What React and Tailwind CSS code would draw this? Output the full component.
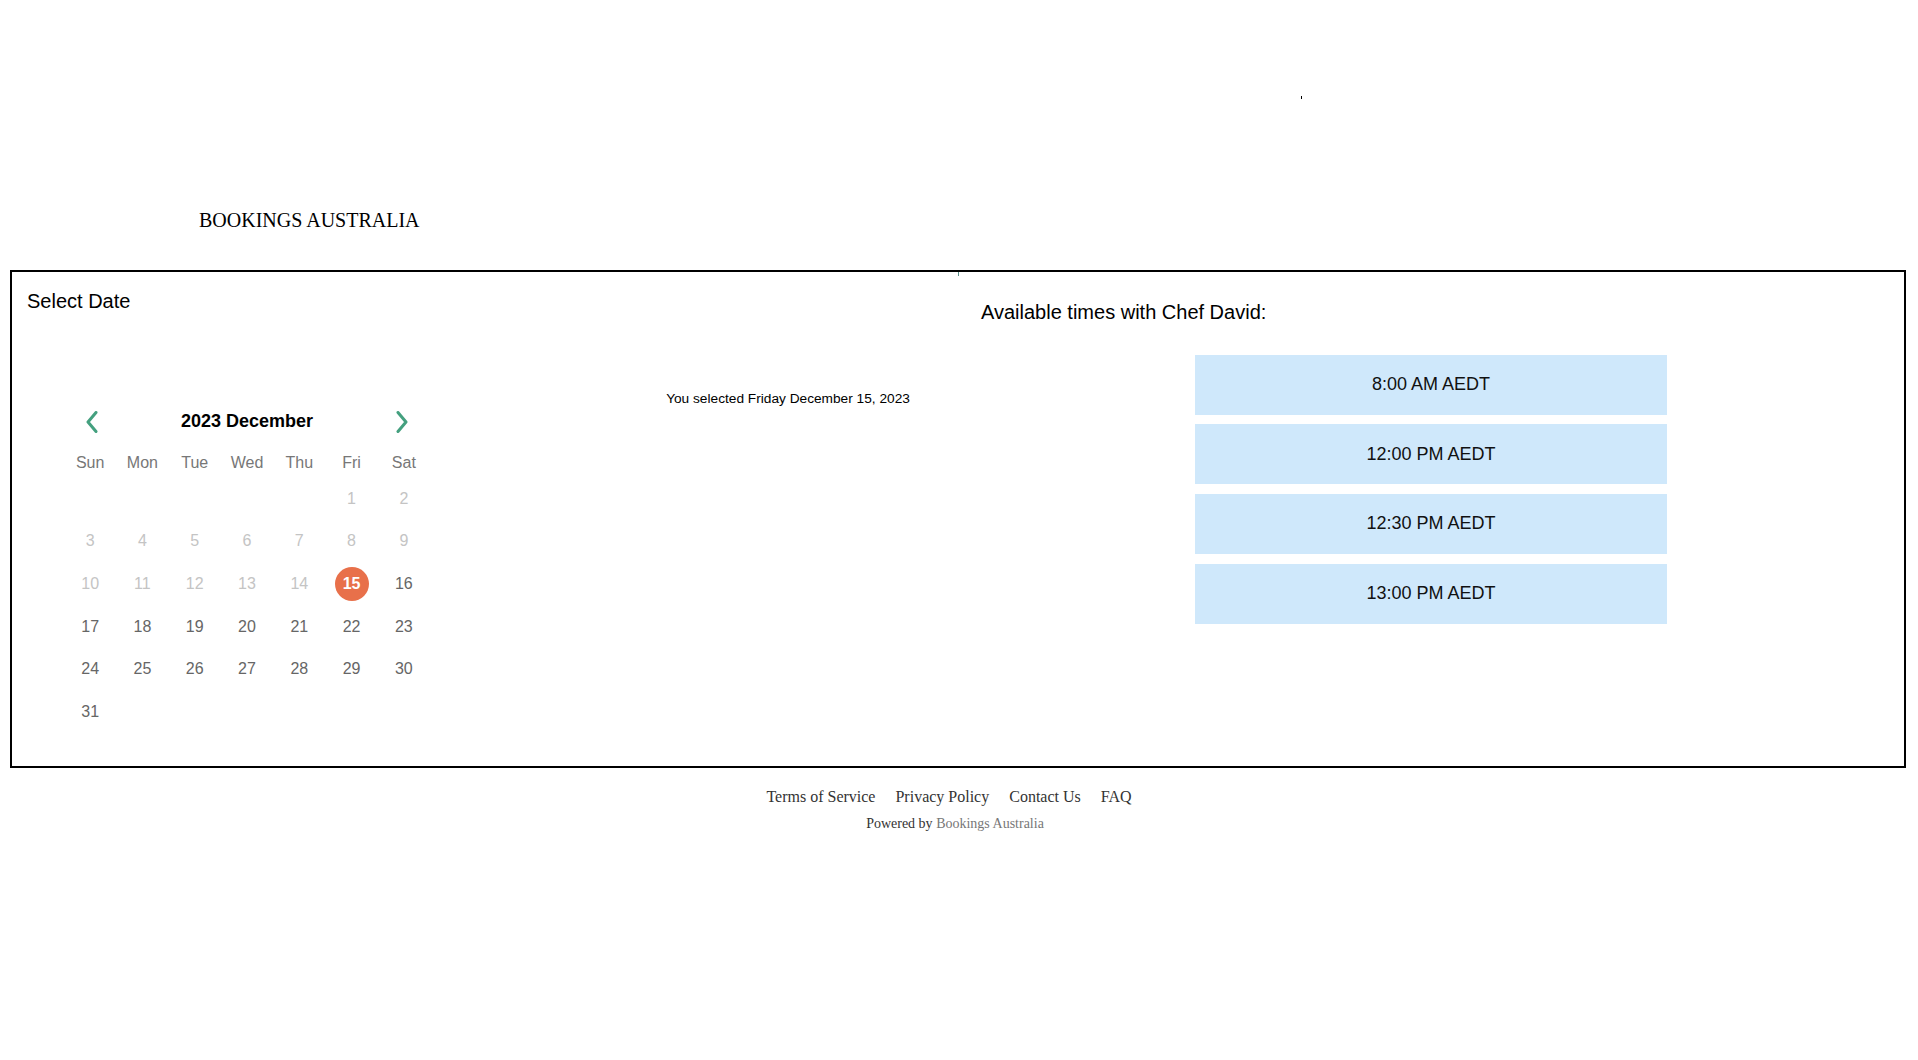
import React from 'react';

const WEEKDAYS = ['Sun', 'Mon', 'Tue', 'Wed', 'Thu', 'Fri', 'Sat'];
const TIMES = ['8:00 AM AEDT', '12:00 PM AEDT', '12:30 PM AEDT', '13:00 PM AEDT'];
const SELECTED = 15;

const Chevron = ({ dir }) => (
  <svg width="12" height="22" viewBox="0 0 12 22" fill="none">
    <polyline
      points={dir === 'left' ? '10,1.5 2,11 10,20.5' : '2,1.5 10,11 2,20.5'}
      stroke="#44a07f"
      strokeWidth="3"
      strokeLinecap="round"
      strokeLinejoin="round"
    />
  </svg>
);

const Calendar = () => {
  // December 2023 starts on a Friday
  const cells = [...Array(5).fill(null), ...Array.from({ length: 31 }, (_, i) => i + 1)];

  return (
    <div className="w-[366px] ml-[37px] mt-[21px]">
      <div className="h-[40px] flex items-center justify-between px-[22px]">
        <button className="flex items-center"><Chevron dir="left" /></button>
        <span className="text-[18px] font-bold text-black">2023 December</span>
        <button className="flex items-center"><Chevron dir="right" /></button>
      </div>
      <div className="grid grid-cols-7 h-[30px] mt-[6px] items-center text-[16px] text-[#777]">
        {WEEKDAYS.map((d) => (
          <div key={d} className="text-center">{d}</div>
        ))}
      </div>
      <div className="grid grid-cols-7">
        {cells.map((day, i) => (
          <div key={i} className="h-[42.6px] flex items-center justify-center text-[16px]">
            {day === SELECTED ? (
              <span className="w-[34px] h-[34px] rounded-full bg-[#e8704a] text-white font-bold flex items-center justify-center">
                {day}
              </span>
            ) : day ? (
              <span className={day < SELECTED ? 'text-[#c4c4c4]' : 'text-[#666]'}>{day}</span>
            ) : null}
          </div>
        ))}
      </div>
    </div>
  );
};

export default function App() {
  return (
    <div className="min-h-screen bg-white font-['Liberation_Sans',Arial,sans-serif] text-black relative">
      {/* stray dot in header */}
      <div className="absolute left-[1301px] top-[96px] w-[1px] h-[3px] bg-black" />

      <div className="h-[270px] pt-[208px] pl-[199px]">
        <h1 className="font-['Liberation_Serif','Times_New_Roman',serif] text-[20px] leading-[24px] text-black">
          BOOKINGS AUSTRALIA
        </h1>
      </div>

      <div className="ml-[10px] mr-[12px] h-[498px] border-2 border-black flex relative">
        <div className="absolute left-1/2 top-0 w-[1px] h-[4px] bg-[#5a8f8a]" />

        {/* Left half - date picker */}
        <div className="w-1/2 pt-[18px] pl-[15px]">
          <h2 className="text-[20px] leading-[23px]">Select Date</h2>
          <div className="flex items-start mt-[67.5px]">
            <Calendar />
            <div className="flex-1 pl-[188px] text-center mt-[9px] text-[13.7px] leading-[17px]">
              You selected Friday December 15, 2023
            </div>
          </div>
        </div>

        {/* Right half - available times */}
        <div className="w-1/2 pt-[28.5px]">
          <h2 className="pl-[23px] text-[20px] leading-[23px]">Available times with Chef David:</h2>
          <div className="flex flex-col items-center gap-[9.7px] mt-[31px]">
            {TIMES.map((t) => (
              <button
                key={t}
                className="w-[472px] h-[60px] bg-[#cfe8fb] text-[18px] text-[#111] flex items-center justify-center"
              >
                {t}
              </button>
            ))}
          </div>
        </div>
      </div>

      <footer className="font-['Liberation_Serif','Times_New_Roman',serif] text-center">
        <div className="mt-[19px] flex justify-center text-[16px] leading-[20px] text-[#333]">
          {['Terms of Service', 'Privacy Policy', 'Contact Us', 'FAQ'].map((l) => (
            <a key={l} href="#" className="mr-5">{l}</a>
          ))}
        </div>
        <div className="mt-[8px] mr-[8px] text-[14px] leading-[18px] text-[#333]">
          Powered by <span className="text-[#777]">Bookings Australia</span>
        </div>
      </footer>
    </div>
  );
}
